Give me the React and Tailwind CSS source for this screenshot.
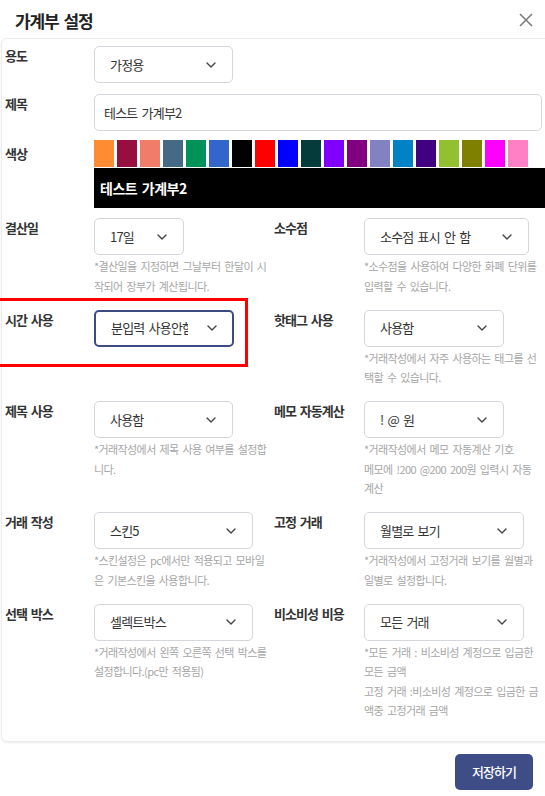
import clsx from 'clsx'

const swatches = [
  '#ff8c33', '#970f3f', '#f07c69', '#446a86', '#009259', '#3366cc', '#000000',
  '#ff0000', '#0000ff', '#053b3b', '#8000ff', '#800080', '#8282c2', '#0082c4',
  '#400080', '#92c02f', '#808000', '#ff00ff', '#ff80c4',
]

function Chevron() {
  return (
    <svg width="10" height="6" viewBox="0 0 10 6" fill="none" className="shrink-0">
      <polyline points="1,1 5,5 9,1" stroke="#444" strokeWidth="1.4" strokeLinecap="round" strokeLinejoin="round" />
    </svg>
  )
}

function Select({ value, width, focused, clip }) {
  return (
    <div
      className={clsx(
        'flex h-[37px] items-center justify-between rounded-[5px] bg-white text-[13px] tracking-[-0.8px] [word-spacing:2px] text-[#333]',
        width,
        focused ? 'border-2 border-[#3d4b84] pl-[15px] pr-[15px]' : 'border border-[#d3d7dc] pl-[15px] pr-4'
      )}
    >
      <span className={clsx('block whitespace-nowrap', clip && 'w-[77px] shrink-0 overflow-hidden')}>{value}</span>
      <Chevron />
    </div>
  )
}

function Help({ lines }) {
  return (
    <p className="mt-[2px] whitespace-nowrap text-[11px] leading-[19.5px] tracking-[-0.6px] [word-spacing:2px] text-[#a6a6a6]">
      {lines.map((l, i) => (
        <span key={i} className="block">{l}</span>
      ))}
    </p>
  )
}

function Field({ label, wide, children }) {
  return (
    <div className="flex items-start">
      <div className={clsx('shrink-0 text-[13px] leading-[20px] font-semibold text-[#333] tracking-[-1px] [word-spacing:2px]', wide ? 'w-[90px]' : 'w-[89px]')}>
        {label}
      </div>
      <div>{children}</div>
    </div>
  )
}

export default function App() {
  return (
    <div className="min-h-screen w-full overflow-hidden bg-white font-['Noto_Sans_CJK_KR','Noto_Sans',sans-serif]">
      {/* header */}
      <div className="flex h-[38px] items-center justify-between pl-[15px] pr-[12px]">
        <h1 className="pt-[4px] text-[17px] font-bold tracking-[-1.1px] [word-spacing:2px] text-[#222]">가계부 설정</h1>
        <svg width="14" height="14" viewBox="0 0 14 14" className="mt-[2px]">
          <path d="M1 1 L13 13 M13 1 L1 13" stroke="#777" strokeWidth="1.5" />
        </svg>
      </div>

      <div className="ml-[1px] w-[570px] rounded-[6px] border border-[#ebebeb] pl-[3px] pt-[7px] pb-[20px] shadow-[0_1px_2px_rgba(0,0,0,0.08)]">
        <Field label="용도">
          <Select value="가정용" width="w-[139px]" />
        </Field>

        <div className="mt-[11px]">
          <Field label="제목">
            <div className="flex h-[37px] w-[448px] items-center rounded-[5px] border border-[#d3d7dc] pl-[9px] text-[13px] tracking-[-0.8px] [word-spacing:2px] text-[#333]">
              테스트 가계부2
            </div>
          </Field>
        </div>

        <div className="mt-[9px] flex items-start">
          <div className="w-[89px] shrink-0 pt-[4px] text-[13px] leading-[20px] font-semibold text-[#333] tracking-[-1px]">색상</div>
          <div>
            <div className="flex gap-[3px]">
              {swatches.map(c => (
                <div key={c} className="h-[27px] w-[20px]" style={{ backgroundColor: c }} />
              ))}
            </div>
            <div className="mt-[1px] flex h-[40px] w-[460px] items-center bg-black pl-[6px] text-[14px] font-bold tracking-[-0.5px] [word-spacing:2px] text-white">
              테스트 가계부2
            </div>
          </div>
        </div>

        <div className="mt-[10px] grid grid-cols-[269px_1fr]">
          <Field label="결산일">
            <Select value="17일" width="w-[90px]" />
            <Help lines={['*결산일을 지정하면 그날부터 한달이 시', '작되어 장부가 계산됩니다.']} />
          </Field>
          <Field label="소수점" wide>
            <Select value="소수점 표시 안 함" width="w-[165px]" />
            <Help lines={['*소수점을 사용하여 다양한 화폐 단위를', '입력할 수 있습니다.']} />
          </Field>
        </div>

        <div className="mt-[13.5px] grid grid-cols-[269px_1fr]">
          <div className="relative">
            <div className="pointer-events-none absolute left-[-9px] top-[-11.5px] z-10 h-[69px] w-[252px] border-[3px] border-[#ff0000]" />
            <Field label="시간 사용">
              <Select value="분입력 사용안함" width="w-[140px]" focused clip />
            </Field>
          </div>
          <Field label="핫태그 사용" wide>
            <Select value="사용함" width="w-[140px]" />
            <Help lines={['*거래작성에서 자주 사용하는 태그를 선', '택할 수 있습니다.']} />
          </Field>
        </div>

        <div className="mt-[13.5px] grid grid-cols-[269px_1fr]">
          <Field label="제목 사용">
            <Select value="사용함" width="w-[139px]" />
            <Help lines={['*거래작성에서 제목 사용 여부를 설정합', '니다.']} />
          </Field>
          <Field label="메모 자동계산" wide>
            <Select value="! @ 원" width="w-[140px]" />
            <Help lines={['*거래작성에서 메모 자동계산 기호', '메모에 !200 @200 200원 입력시 자동', '계산']} />
          </Field>
        </div>

        <div className="mt-[13.5px] grid grid-cols-[269px_1fr]">
          <Field label="거래 작성">
            <Select value="스킨5" width="w-[159px]" />
            <Help lines={['*스킨설정은 pc에서만 적용되고 모바일', '은 기본스킨을 사용합니다.']} />
          </Field>
          <Field label="고정 거래" wide>
            <Select value="월별로 보기" width="w-[160px]" />
            <Help lines={['*거래작성에서 고정거래 보기를 월별과', '일별로 설정합니다.']} />
          </Field>
        </div>

        <div className="mt-[13.5px] grid grid-cols-[269px_1fr]">
          <Field label="선택 박스">
            <Select value="셀렉트박스" width="w-[159px]" />
            <Help lines={['*거래작성에서 왼쪽 오른쪽 선택 박스를', '설정합니다.(pc만 적용됨)']} />
          </Field>
          <Field label="비소비성 비용" wide>
            <Select value="모든 거래" width="w-[160px]" />
            <Help lines={['*모든 거래 : 비소비성 계정으로 입금한', '모든 금액', '고정 거래 :비소비성 계정으로 입금한 금', '액중 고정거래 금액']} />
          </Field>
        </div>
      </div>

      <div className="mt-[12px] flex justify-end pr-[12px]">
        <button className="h-[36px] w-[78px] rounded-[5px] bg-[#3e4d85] text-[13px] font-medium tracking-[-1px] text-white">
          저장하기
        </button>
      </div>
    </div>
  )
}
